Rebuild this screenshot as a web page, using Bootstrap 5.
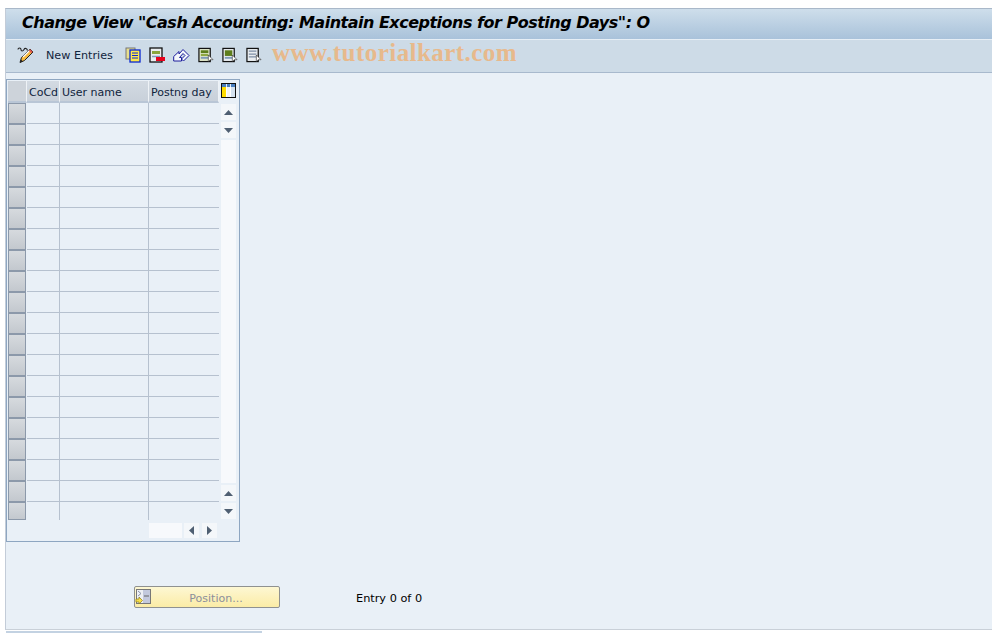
<!DOCTYPE html>
<html lang="en">
<head>
  <meta charset="UTF-8" />
  <meta name="viewport" content="width=device-width, initial-scale=1.0"/>
  <title>Change View</title>
  <link rel="stylesheet" href="https://cdn.jsdelivr.net/npm/bootstrap@5.3.0/dist/css/bootstrap.min.css">
  <style>
    html, body { height: 100%; }
    body {
      background: #fff;
      font-family: "DejaVu Sans", sans-serif;
      font-size: 11px;
      color: #10243c;
      overflow: hidden;
      padding-top: 8px;
    }
    .sap-frame {
      height: 622px;
      margin-left: 5px;
      border-left: 1px solid #c3ccd8;
      border-top: 1px solid #a9b8c9;
      border-bottom: 1px solid #c9d0d8;
      background: #e9f0f7;
      position: relative;
    }
    .title-bar {
      height: 31px;
      padding: 0 0 2px 16px;
      background: linear-gradient(to bottom, #cedeeb, #a9c2da);
      border-bottom: 1px solid #e6eef5;
      font-size: 16px;
      font-weight: 700;
      font-style: italic;
      letter-spacing: -.5px;
      color: #000;
      white-space: nowrap;
    }
    .tool-bar {
      height: 33px;
      padding: 0 0 2px 11px;
      background: #cddbe7;
      border-bottom: 1px solid #a8b9cd;
    }
    .tool-bar svg { display: block; flex: none; }
    .tool-ico { margin-right: 8px; }
    .new-entries { margin: 0 12px 0 11px; padding-top: 2px; font-size: 11.2px; white-space: nowrap; }
    .watermark {
      position: absolute;
      left: 266px;
      top: 25px;
      font-family: "Liberation Serif", serif;
      font-size: 25px;
      font-weight: 700;
      color: #e7b98c;
      letter-spacing: .45px;
      white-space: nowrap;
    }
    .tc-box {
      width: 234px;
      height: 463px;
      margin: 6px 0 0 0;
      border: 1px solid #8ea6c1;
      padding: 1px 0 0 1px;
    }
    .grid-hdr { height: 22px; }
    .grid-row { height: 21px; }
    .sel-btn {
      width: 18px;
      margin-right: 1px;
      flex: none;
      background: linear-gradient(to bottom, #d6dade, #c3c8ce);
      border: 1px solid #8c99aa;
    }
    .col-a { width: 33px; flex: none; }
    .col-b { width: 89px; flex: none; }
    .col-c { width: 70px; flex: none; }
    .grid-hdr > div {
      background: linear-gradient(to bottom, #d3dae2, #c8d0da);
      border-bottom: 2px solid #b9c6d6;
      border-right: 1px solid #eef2f6;
      padding: 4px 0 0 2px;
      white-space: nowrap;
      overflow: hidden;
    }
    .grid-hdr > .sel-head { padding: 0; background: #cdd3da; width: 19px; flex: none; }
    .grid-row .col-a, .grid-row .col-b, .grid-row .col-c {
      border-right: 1px solid #b6c1cf;
      border-bottom: 1px solid #b6c1cf;
    }
    .grid-row .col-c { border-right: 0; }
    .grid-row.last-row { height: 18px; }
    .grid-row.last-row > div { border-bottom: 0; }
    .grid-row.last-row .sel-btn { border-bottom: 1px solid #8c99aa; }
    .side-col { width: 15px; margin-left: 2px; flex: none; }
    .corner-ico { display: block; width: 15px; height: 15px; margin-top: 2px; }
    .scroll-stack { margin-top: 6px; height: 415px; }
    .scroll-btn { height: 16px; background: #f4f7fa; flex: none; }
    .scroll-track { background: #f7f9fc; }
    .h-scroll { height: 15px; margin: 3px 0 0 141px; }
    .h-track { width: 33px; background: #f7f9fc; margin-right: 2px; }
    .h-btn { width: 15px; background: #f4f7fa; margin-right: 3px; }
    .bottom-row { margin-top: 44px; height: 22px; padding-left: 128px; }
    .pos-btn {
      width: 146px;
      height: 22px;
      padding: 0;
      font-family: inherit;
      font-size: 11px;
      color: #8b8f9b;
      background: linear-gradient(to bottom, #fdf7d3, #fbeca6);
      border: 1px solid #8f9190;
      border-radius: 2px;
    }
    .pos-btn svg { margin-left: 0; flex: none; }
    .pos-btn span { flex: 1; text-align: center; padding: 4px 0 0 2px; }
    .entry-txt { margin-left: 76px; padding-top: 4px; color: #000; font-size: 11.3px; white-space: nowrap; }
    .foot-bar { width: 256px; height: 3px; margin-left: 6px; margin-top: 1px; background: #c3d2e2; }
  </style>
</head>
<body>

  <div class="sap-frame">
    <div class="title-bar d-flex align-items-center">Change View "Cash Accounting: Maintain Exceptions for Posting Days": O</div>

    <div class="tool-bar d-flex align-items-center">
      <svg width="18" height="18" viewBox="0 0 18 18">
        <path d="M1 3.500c0-2 3-2 3 0s2 2 3 0 3-1 3.500 1" fill="none" stroke="#222" stroke-width="1.100"/>
        <path d="M3 16.500l1.500-5L13 3l3 3-8.500 8.500z" fill="#f6b93f" stroke="#222"/>
        <path d="M6 11l7-7" stroke="#fff" stroke-width="1.200"/>
        <path d="M12.500 4l2.500 2.500" stroke="#e2574c" stroke-width="2"/>
        <path d="M3 16.500l1-3 2 2z" fill="#222"/>
      </svg>
      <span class="new-entries">New Entries</span>
      <svg class="tool-ico" width="16" height="16" viewBox="0 0 16 16">
        <rect x="1" y="1" width="9" height="11" fill="#e8df8e" stroke="#777"/>
        <rect x="5" y="3" width="10" height="12" fill="#ffe94a" stroke="#0a28d0" stroke-width="1.300"/>
        <path d="M7 6h6M7 8.500h6M7 11h6" stroke="#0a28d0"/>
      </svg>
      <svg class="tool-ico" width="16" height="16" viewBox="0 0 16 16">
        <rect x="1" y="1" width="12" height="14" fill="#e9edf0" stroke="#111" stroke-width="1.300"/>
        <rect x="3" y="4" width="8" height="3" fill="#8aa53c"/>
        <path d="M3 9.500h8" stroke="#7f9ab8" stroke-width="1.500"/>
        <rect x="7" y="10" width="9" height="4" fill="#e8001c"/>
      </svg>
      <svg class="tool-ico" width="17" height="16" viewBox="0 0 17 16">
        <path d="M.700 9.500L6 4.500V7l4-4.500 6 6-5.500 5.500-2-2 3.500-3.500-2-2-3.500 4H8.500v3.500H.700z" fill="#f4f7fb" stroke="#1c1c9c" stroke-width="1" stroke-linejoin="round"/>
      </svg>
      <svg class="tool-ico" width="16" height="16" viewBox="0 0 17 16">
        <rect x="1" y="1" width="12" height="14" fill="#dfe6c8" stroke="#111" stroke-width="1.300"/>
        <rect x="3" y="3" width="8" height="3" fill="#5d7d1c"/>
        <rect x="3" y="7" width="8" height="2" fill="#8aa53c"/>
        <rect x="3" y="10" width="8" height="2" fill="#7f9ab8"/>
        <path d="M11 8v7l2-2h3z" fill="#fff" stroke="#222" stroke-width=".6"/>
      </svg>
      <svg class="tool-ico" width="16" height="16" viewBox="0 0 17 16">
        <rect x="1" y="1" width="12" height="14" fill="#e9edf0" stroke="#111" stroke-width="1.300"/>
        <rect x="3" y="3" width="8" height="6" fill="#5d7d1c"/>
        <rect x="3" y="10" width="8" height="2" fill="#7f9ab8"/>
        <path d="M11 8v7l2-2h3z" fill="#fff" stroke="#222" stroke-width=".6"/>
      </svg>
      <svg width="16" height="16" viewBox="0 0 17 16">
        <rect x="1" y="1" width="12" height="14" fill="#e9edf0" stroke="#111" stroke-width="1.300"/>
        <path d="M3 4h8M3 7h8M3 10h8" stroke="#7f8fa5" stroke-width="1.300"/>
        <path d="M11 8v7l2-2h3z" fill="#fff" stroke="#222" stroke-width=".6"/>
      </svg>
    </div>
    <div class="watermark">www.tutorialkart.com</div>

    <div class="tc-box">
      <div class="d-flex">
        <div>
          <div class="grid-hdr d-flex">
            <div class="sel-head"></div>
            <div class="col-a">CoCd</div>
            <div class="col-b">User name</div>
            <div class="col-c">Postng day</div>
          </div>
          <div id="rows"></div>
        </div>
        <div class="side-col">
          <svg class="corner-ico" viewBox="0 0 15 15">
            <rect x=".5" y=".5" width="14" height="14" fill="#fff" stroke="#111"/>
            <rect x="1" y="1" width="13" height="3" fill="#4a7fc0"/>
            <path d="M5.500 1v3M9.500 1v3" stroke="#e4edf6"/>
            <rect x="1" y="4" width="4" height="10" fill="#ffdc00"/>
            <rect x="6" y="4" width="3" height="10" fill="#f4f4f4"/>
            <rect x="10" y="4" width="4" height="10" fill="#d5e2ef"/>
          </svg>
          <div class="scroll-stack d-flex flex-column">
            <div class="scroll-btn d-flex align-items-center justify-content-center"><svg width="9" height="5"><path d="M0 5L4.500 0 9 5z" fill="#4f5f72"/></svg></div>
            <div style="height:2px"></div>
            <div class="scroll-btn d-flex align-items-center justify-content-center"><svg width="9" height="5"><path d="M0 0L4.500 5 9 0z" fill="#4f5f72"/></svg></div>
            <div style="height:2px"></div>
            <div class="scroll-track flex-grow-1"></div>
            <div style="height:2px"></div>
            <div class="scroll-btn d-flex align-items-center justify-content-center"><svg width="9" height="5"><path d="M0 5L4.500 0 9 5z" fill="#4f5f72"/></svg></div>
            <div style="height:2px"></div>
            <div class="scroll-btn d-flex align-items-center justify-content-center"><svg width="9" height="5"><path d="M0 0L4.500 5 9 0z" fill="#4f5f72"/></svg></div>
          </div>
        </div>
      </div>
      <div class="h-scroll d-flex">
        <div class="h-track"></div>
        <div class="h-btn d-flex align-items-center justify-content-center"><svg width="5" height="9"><path d="M5 0L0 4.500 5 9z" fill="#4f5f72"/></svg></div>
        <div class="h-btn d-flex align-items-center justify-content-center"><svg width="5" height="9"><path d="M0 0L5 4.500 0 9z" fill="#4f5f72"/></svg></div>
      </div>
    </div>

    <div class="d-flex align-items-center bottom-row">
      <button class="pos-btn d-flex align-items-center" disabled>
        <svg width="16" height="16" viewBox="0 0 16 16">
          <rect x="1.500" y=".5" width="14" height="14" fill="#eef0f4" stroke="#777"/>
          <rect x="8" y="1" width="7" height="13" fill="#c3c9dd"/>
          <path d="M9 7h5" stroke="#666"/>
          <path d="M3 2l3 2.500L3 7" fill="none" stroke="#8a93a8"/>
          <path d="M1 10h3V8l3.500 3.500L4 15v-2H1z" fill="#f7e04a" stroke="#8a7a1a" stroke-width=".7"/>
        </svg>
        <span>Position...</span>
      </button>
      <div class="entry-txt">Entry 0 of 0</div>
    </div>
  </div>
  <div class="foot-bar"></div>

  <script>
    var html = "";
    for (var i = 0; i < 20; i++) {
      var cls = i === 19 ? "grid-row last-row d-flex" : "grid-row d-flex";
      html += '<div class="' + cls + '"><div class="sel-btn"></div><div class="col-a"></div><div class="col-b"></div><div class="col-c"></div></div>';
    }
    document.getElementById("rows").innerHTML = html;
  </script>
  <script src="https://cdn.jsdelivr.net/npm/bootstrap@5.3.0/dist/js/bootstrap.bundle.min.js"></script>
</body>
</html>
